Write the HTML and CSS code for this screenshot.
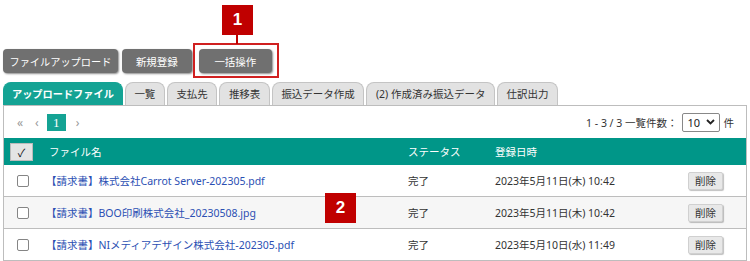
FILE: index.html
```html
<!DOCTYPE html>
<html lang="ja">
<head>
    <meta charset="UTF-8">
    <title>アップロードファイル</title>
    <link rel="stylesheet" href="styles.css">
</head>
<body>
    <div class="page">
        <div class="toolbar">
            <button class="btn btn-wide">ファイルアップロード</button>
            <button class="btn">新規登録</button>
            <button class="btn btn-bulk">一括操作</button>
        </div>

        <div class="tabs">
            <div class="tab active">アップロードファイル</div>
            <div class="tab">一覧</div>
            <div class="tab">支払先</div>
            <div class="tab">推移表</div>
            <div class="tab">振込データ作成</div>
            <div class="tab">(2) 作成済み振込データ</div>
            <div class="tab">仕訳出力</div>
        </div>

        <div class="panel">
            <div class="pager">
                <div class="pages">
                    <span class="pg">&laquo;</span>
                    <span class="pg">&lsaquo;</span>
                    <span class="pg current">1</span>
                    <span class="pg">&rsaquo;</span>
                </div>
                <div class="count">
                    <span>1 - 3 / 3 一覧件数：</span>
                    <span class="select">10
                        <svg width="9" height="6" viewBox="0 0 9 6"><path d="M1 1l3.5 3.5L8 1" fill="none" stroke="#222" stroke-width="1.8"/></svg>
                    </span>
                    <span>件</span>
                </div>
            </div>

            <table class="files">
                <colgroup>
                    <col class="c-check">
                    <col class="c-name">
                    <col class="c-status">
                    <col class="c-date">
                    <col>
                </colgroup>
                <thead>
                    <tr>
                        <th><span class="checkall">✓</span></th>
                        <th class="th-name">ファイル名</th>
                        <th>ステータス</th>
                        <th>登録日時</th>
                        <th></th>
                    </tr>
                </thead>
                <tbody>
                    <tr>
                        <td class="td-check"><span class="box"></span></td>
                        <td><a href="#">【請求書】株式会社Carrot Server-202305.pdf</a></td>
                        <td>完了</td>
                        <td>2023年5月11日(木) 10:42</td>
                        <td><button class="del">削除</button></td>
                    </tr>
                    <tr class="alt">
                        <td class="td-check"><span class="box"></span></td>
                        <td><a href="#">【請求書】BOO印刷株式会社_20230508.jpg</a></td>
                        <td>完了</td>
                        <td>2023年5月11日(木) 10:42</td>
                        <td><button class="del">削除</button></td>
                    </tr>
                    <tr>
                        <td class="td-check"><span class="box"></span></td>
                        <td><a href="#">【請求書】NIメディアデザイン株式会社-202305.pdf</a></td>
                        <td>完了</td>
                        <td>2023年5月10日(水) 11:49</td>
                        <td><button class="del">削除</button></td>
                    </tr>
                </tbody>
            </table>
        </div>

        <div class="mark-box"></div>
        <div class="mark-line"></div>
        <div class="badge badge-1">1</div>
        <div class="badge badge-2">2</div>
    </div>
</body>
</html>
```

FILE: styles.css
```css
body {
    margin: 0;
    font-family: "Noto Sans", "Noto Sans CJK JP", sans-serif;
    font-size: 10.5px;
    color: #333;
    background-color: #fff;
}
.page {
    position: relative;
    width: 750px;
    height: 261px;
    padding: 49px 0 0 3px;
    box-sizing: border-box;
    overflow: hidden;
}
.toolbar {
    display: flex;
    gap: 4px;
}
.btn {
    height: 24px;
    min-width: 70px;
    padding: 0 7px;
    border: none;
    border-radius: 4px;
    background-color: #707070;
    color: #fff;
    font-family: inherit;
    font-size: 10.5px;
    box-shadow: 1px 1px 2px rgba(0, 0, 0, 0.45);
}
.btn-wide {
    padding: 0 6.5px;
    font-size: 10.2px;
}
.btn-bulk {
    min-width: 73px;
    margin-left: 3px;
}
.tabs {
    display: flex;
    gap: 2px;
    margin-top: 9px;
}
.tab {
    height: 23px;
    line-height: 23px;
    padding: 0 8.5px;
    box-sizing: border-box;
    border: 1px solid #c4c4c4;
    border-bottom: none;
    border-radius: 8px 8px 0 0;
    background-color: #e2e2e2;
    color: #333;
}
.tab.active {
    padding: 0 8px;
    border-color: #14a394;
    background-color: #14a394;
    color: #fff;
    font-weight: bold;
    font-size: 10.2px;
}
.panel {
    width: 744px;
    box-sizing: border-box;
    border: 1px solid #bdbdbd;
    border-bottom: none;
}
.pager {
    display: flex;
    justify-content: space-between;
    align-items: center;
    height: 32px;
    padding: 0 12px 0 11px;
}
.pages {
    display: flex;
    align-items: center;
    gap: 8px;
}
.pg {
    color: #999;
    font-size: 12px;
    padding: 0 2px;
}
.pg.current {
    width: 19px;
    height: 17px;
    margin-left: -2px;
    padding: 0;
    line-height: 17px;
    text-align: center;
    background-color: #14a394;
    color: #fff;
    font-family: "Liberation Serif", serif;
    font-size: 13px;
}
.count {
    display: flex;
    align-items: center;
    gap: 4px;
}
.select {
    display: flex;
    align-items: center;
    justify-content: space-between;
    width: 38px;
    height: 19px;
    padding: 0 4px 0 5px;
    box-sizing: border-box;
    border: 1px solid #888;
    border-radius: 2px;
    color: #222;
    font-size: 11px;
}
.files {
    width: 100%;
    border-collapse: collapse;
    table-layout: fixed;
}
.c-check { width: 42px; }
.c-name { width: 362px; }
.c-status { width: 87px; }
.c-date { width: 193px; }
th {
    height: 27px;
    padding: 0;
    background-color: #009688;
    color: #fff;
    font-weight: normal;
    text-align: left;
}
.th-name {
    padding-left: 3px;
}
.checkall {
    display: block;
    width: 23px;
    height: 18px;
    margin-left: 6px;
    line-height: 18px;
    text-align: center;
    background-color: #e4e4e4;
    border: 1px solid #bbb;
    box-sizing: border-box;
    color: #111;
    font-size: 11px;
}
td {
    height: 31px;
    padding: 0;
    border-bottom: 1px solid #bdbdbd;
    color: #333;
}
tr.alt td {
    background-color: #f6f6f6;
}
.box {
    display: block;
    width: 10px;
    height: 10px;
    margin-left: 13px;
    border: 1px solid #858585;
    border-radius: 2px;
    background-color: #fff;
}
a {
    color: #2b4fb3;
    text-decoration: none;
}
.del {
    width: 35px;
    height: 18px;
    padding: 0;
    border: 1px solid #d0d0d0;
    border-radius: 2px;
    background-color: #e8e8e8;
    color: #333;
    font-family: inherit;
    font-size: 10.5px;
    box-shadow: 1px 1px 1px rgba(0, 0, 0, 0.25);
}

/* annotations */
.mark-box {
    position: absolute;
    left: 193px;
    top: 43px;
    width: 86px;
    height: 35px;
    box-sizing: border-box;
    border: 2px solid #d02020;
}
.mark-line {
    position: absolute;
    left: 236px;
    top: 34px;
    width: 2px;
    height: 10px;
    background-color: #c00000;
}
.badge {
    position: absolute;
    width: 31px;
    height: 30px;
    line-height: 30px;
    text-align: center;
    background-color: #c00000;
    color: #fff;
    font-family: "Liberation Sans", sans-serif;
    font-size: 17px;
    font-weight: bold;
}
.badge-1 { left: 222px; top: 5px; }
.badge-2 { left: 325px; top: 193px; }
```
